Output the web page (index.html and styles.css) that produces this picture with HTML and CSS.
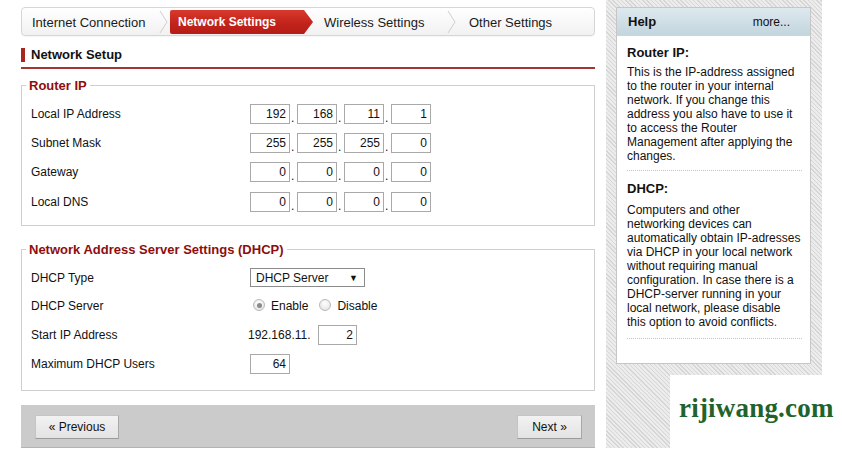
FILE: index.html
```html
<!DOCTYPE html>
<html lang="en">
<head>
<meta charset="utf-8">
<title>Network Settings</title>
<link rel="stylesheet" href="styles.css">
</head>
<body>
<div class="page">
  <main class="main">
    <nav class="steps">
      <span class="step step-first">Internet Connection</span>
      <svg class="chev" width="9" height="24" viewBox="0 0 9 24"><polyline points="1,1 8,12 1,23" fill="none" stroke="#cfcfcf" stroke-width="1"/></svg>
      <span class="step step-active">Network Settings</span>
      <span class="step step-third">Wireless Settings</span>
      <svg class="chev" width="9" height="24" viewBox="0 0 9 24"><polyline points="1,1 8,12 1,23" fill="none" stroke="#cfcfcf" stroke-width="1"/></svg>
      <span class="step step-last">Other Settings</span>
    </nav>

    <h2 class="section-title"><span>Network Setup</span></h2>

    <fieldset class="group group-router">
      <legend>Router IP</legend>
      <div class="row">
        <span class="label">Local IP Address</span>
        <span class="ip"><input class="octet" value="192"><span class="dot">.</span><input class="octet" value="168"><span class="dot">.</span><input class="octet" value="11"><span class="dot">.</span><input class="octet" value="1"></span>
      </div>
      <div class="row">
        <span class="label">Subnet Mask</span>
        <span class="ip"><input class="octet" value="255"><span class="dot">.</span><input class="octet" value="255"><span class="dot">.</span><input class="octet" value="255"><span class="dot">.</span><input class="octet" value="0"></span>
      </div>
      <div class="row">
        <span class="label">Gateway</span>
        <span class="ip"><input class="octet" value="0"><span class="dot">.</span><input class="octet" value="0"><span class="dot">.</span><input class="octet" value="0"><span class="dot">.</span><input class="octet" value="0"></span>
      </div>
      <div class="row">
        <span class="label">Local DNS</span>
        <span class="ip"><input class="octet" value="0"><span class="dot">.</span><input class="octet" value="0"><span class="dot">.</span><input class="octet" value="0"><span class="dot">.</span><input class="octet" value="0"></span>
      </div>
    </fieldset>

    <fieldset class="group group-dhcp">
      <legend>Network Address Server Settings (DHCP)</legend>
      <div class="row">
        <span class="label">DHCP Type</span>
        <span class="select"><span>DHCP Server</span><span class="caret">&#9660;</span></span>
      </div>
      <div class="row">
        <span class="label">DHCP Server</span>
        <span class="radios">
          <span class="radio radio-on"></span><span class="radio-text">Enable</span>
          <span class="radio"></span><span class="radio-text">Disable</span>
        </span>
      </div>
      <div class="row">
        <span class="label">Start IP Address</span>
        <span class="ip"><span class="prefix">192.168.11.</span><input class="octet octet-start" value="2"></span>
      </div>
      <div class="row">
        <span class="label">Maximum DHCP Users</span>
        <span class="ip"><input class="octet" value="64"></span>
      </div>
    </fieldset>

    <div class="actions">
      <button class="btn btn-prev">&laquo; Previous</button>
      <button class="btn btn-next">Next &raquo;</button>
    </div>
  </main>

  <aside class="side">
    <div class="help">
      <div class="help-head"><span class="help-title">Help</span><span class="help-more">more...</span></div>
      <div class="help-body">
        <section class="help-sec">
          <h3>Router IP:</h3>
          <p>This is the IP-address assigned<br>to the router in your internal<br>network. If you change this<br>address you also have to use it<br>to access the Router<br>Management after applying the<br>changes.</p>
        </section>
        <section class="help-sec">
          <h3>DHCP:</h3>
          <p>Computers and other<br>networking devices can<br>automatically obtain IP-adresses<br>via DHCP in your local network<br>without requiring manual<br>configuration. In case there is a<br>DHCP-server running in your<br>local network, please disable<br>this option to avoid conflicts.</p>
        </section>
      </div>
    </div>
  </aside>

  <div class="watermark">rijiwang.com</div>
</div>
</body>
</html>
```

FILE: styles.css
```css
* { box-sizing: border-box; }

html, body {
  margin: 0;
  padding: 0;
  background: #fff;
}

body {
  font-family: "Liberation Sans", Arial, sans-serif;
  font-size: 12px;
  color: #111;
  width: 842px;
  height: 457px;
  overflow: hidden;
}

.page {
  position: relative;
  display: flex;
  align-items: flex-start;
  gap: 11px;
  padding-left: 21px;
  height: 457px;
}

.main {
  width: 574px;
  padding-top: 7px;
}

/* breadcrumb steps */
.steps {
  display: flex;
  align-items: center;
  height: 29px;
  padding-top: 1px;
  border: 1px solid #d6d6d6;
  border-radius: 4px;
  background: linear-gradient(#ffffff, #f1f1f1);
  box-shadow: 0 1px 1px rgba(0,0,0,0.04);
  font-size: 13px;
  color: #1a1a1a;
}

.step {
  display: flex;
  align-items: center;
  height: 24px;
  white-space: nowrap;
}

.step-first { width: 137px; padding-left: 10px; }
.step-third { width: 134px; padding-left: 11px; }
.step-last  { padding-left: 13px; }

.chev { flex: none; display: block; }
.chev:first-of-type { margin-right: 2px; }

.step-active {
  width: 143px;
  padding-left: 8px;
  color: #fff;
  font-weight: bold;
  font-size: 12px;
  background: linear-gradient(#d93a2e, #c2231b 55%, #b51d16);
  clip-path: polygon(0 0, calc(100% - 9px) 0, 100% 50%, calc(100% - 9px) 100%, 0 100%);
  border-radius: 2px 0 0 2px;
}

/* section title */
.section-title {
  margin: 12px 0 0;
  padding-bottom: 5px;
  border-bottom: 2px solid #a33630;
  font-size: 13px;
  font-weight: bold;
  color: #111;
}

.section-title span {
  display: block;
  border-left: 4px solid #a8261f;
  padding-left: 6px;
  line-height: 14px;
}

/* field groups */
.group {
  margin: 9px 0 0;
  padding: 6px 10px 9px 9px;
  border: 1px solid #cfcfcf;
  min-width: 0;
}

.group-dhcp {
  margin-top: 16px;
  padding-top: 6px;
  padding-bottom: 12px;
}

.group legend {
  margin-left: -5px;
  padding: 0 3px;
  font-size: 13px;
  font-weight: bold;
  line-height: 15px;
  color: #8e0d0d;
}

.row {
  display: grid;
  grid-template-columns: 219px 1fr;
  align-items: center;
  height: 29.3px;
}

.group-dhcp .row { height: 28.8px; }

.label { white-space: nowrap; }

.ip {
  display: flex;
  align-items: center;
}

.octet {
  width: 40px;
  height: 20px;
  margin: 0;
  padding: 0 3px 0 2px;
  border: 1px solid #a9a9a9;
  background: #fff;
  text-align: right;
  font-family: "Liberation Sans", Arial, sans-serif;
  font-size: 12px;
  color: #111;
  outline: none;
}

.octet-start { width: 39px; }

.dot {
  width: 7px;
  padding-left: 1px;
  line-height: 20px;
  align-self: flex-end;
  height: 16px;
}

.prefix {
  width: 70px;
  margin-left: -2px;
  white-space: nowrap;
}

.select {
  display: flex;
  align-items: center;
  justify-content: space-between;
  width: 115px;
  height: 19px;
  padding: 0 6px 0 5px;
  border: 1px solid #8c8c8c;
  background: #fff;
}

.caret { font-size: 9px; color: #111; }

.radios {
  display: flex;
  align-items: center;
}

.radio {
  position: relative;
  width: 12px;
  height: 12px;
  margin: -2px 6px 0 3px;
  border-radius: 50%;
  border: 1px solid #b9b9b9;
  background: radial-gradient(circle at 50% 35%, #ffffff, #dedede);
}

.radio-on::after {
  content: "";
  position: absolute;
  left: 2.5px;
  top: 2.5px;
  width: 5px;
  height: 5px;
  border-radius: 50%;
  background: #8a8a8a;
}

.radio-text { margin-right: 8px; }
.radio-text + .radio { margin-left: 3px; }

/* bottom actions */
.actions {
  display: flex;
  justify-content: space-between;
  align-items: center;
  margin-top: 14px;
  height: 43px;
  padding: 2px 13px 0 14px;
  background: #cbcbcb;
  border-bottom: 1px solid #b4b4b4;
}

.btn {
  height: 24px;
  margin: 0;
  border: 1px solid #c4c4c4;
  border-bottom-color: #9a9a9a;
  border-right-color: #a8a8a8;
  background: linear-gradient(#f2f2f2, #e3e3e3);
  font-family: "Liberation Sans", Arial, sans-serif;
  font-size: 12px;
  color: #111;
  padding: 0;
}

.btn-prev { width: 84px; }
.btn-next { width: 65px; }

/* help side panel */
.side {
  width: 216px;
  height: 448px;
  padding: 7px 11px 0 10px;
  background: repeating-linear-gradient(45deg, #d6d6d6 0, #d6d6d6 1px, #ececec 1px, #ececec 3px);
}

.help {
  width: 195px;
  border: 1px solid #c6c6c6;
  background: #fff;
  padding-bottom: 24px;
}

.help-head {
  display: flex;
  justify-content: space-between;
  align-items: center;
  height: 28px;
  padding: 0 20px 0 11px;
  background: linear-gradient(#dde9ef, #c3d5de);
  border-bottom: 1px solid #c9d6dc;
}

.help-title { font-weight: bold; font-size: 13px; }
.help-more { font-size: 12px; }

.help-body {
  padding: 0 8px 0 10px;
}

.help-sec {
  padding: 10px 0 7px;
  border-bottom: 1px dotted #c4c4c4;
}

.help-sec + .help-sec { padding-top: 11px; padding-bottom: 9px; }

.help-sec h3 {
  margin: 0 0 5px;
  font-size: 13px;
  line-height: 14px;
  font-weight: bold;
}

.help-sec + .help-sec h3 { margin-bottom: 7px; }

.help-sec p {
  margin: 0;
  line-height: 14px;
  font-size: 12px;
  white-space: nowrap;
}

/* watermark overlay */
.watermark {
  position: absolute;
  left: 670px;
  top: 375px;
  right: 0;
  bottom: 0;
  padding: 18px 0 0 9px;
  background: #fff;
  font-family: "Liberation Serif", "Times New Roman", serif;
  font-size: 27px;
  font-weight: bold;
  color: #22632a;
  letter-spacing: 0.2px;
}
```
